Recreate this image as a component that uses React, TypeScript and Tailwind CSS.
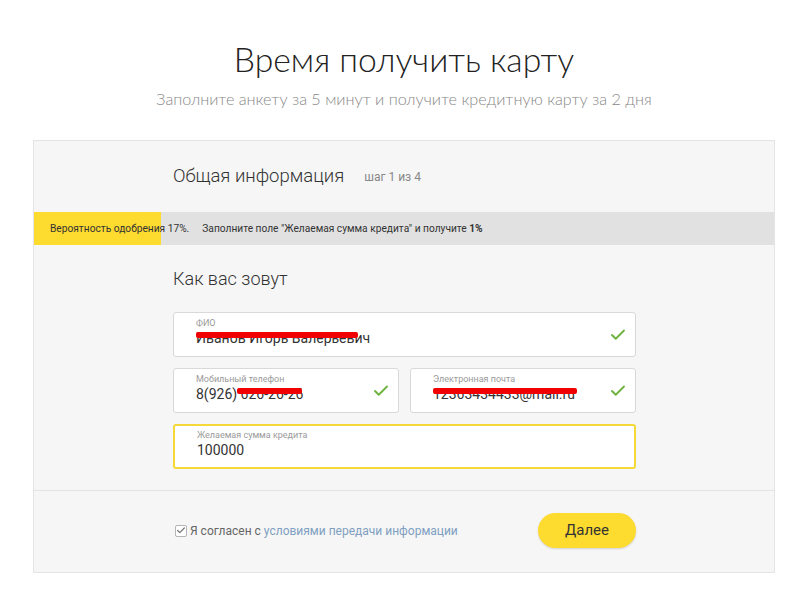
import { Check } from 'lucide-react'

function Field({ label, value, redact, redactLeft = 0, className, active, ok }: {
  label: string
  value: string
  redact?: number
  redactLeft?: number
  className?: string
  active?: boolean
  ok?: boolean
}) {
  return (
    <div
      className={`relative h-[45px] bg-white rounded-[3px] ${active ? 'border-2 border-[#f5d939]' : 'border border-[#d9d9d9]'} ${className ?? ''}`}
    >
      <div className={`pl-[22px] ${active ? 'pt-[4px]' : 'pt-[5px]'}`}>
        <div className="text-[9px] leading-[11px] text-[#9a9a9a]">{label}</div>
        <div className="relative text-[14px] leading-[18px] text-[#333]">
          {value}
          {redact ? (
            <span
              className="absolute top-[3px] h-[6px] bg-[#f00000] rounded-[2px]"
              style={{ width: redact, left: redactLeft }}
            />
          ) : null}
        </div>
      </div>
      {ok && (
        <Check className="absolute right-[8px] top-1/2 -translate-y-1/2 text-[#6db33f]" size={18} strokeWidth={2.5} />
      )}
    </div>
  )
}

export default function App() {
  return (
    <div className="w-[800px] h-[596px] bg-white font-['Open_Sans','Liberation_Sans',sans-serif] overflow-hidden">
      <div className="pt-[37px] pl-[8px] text-center font-['Lato','Liberation_Sans',sans-serif]">
        <h1 className="text-[33.7px] leading-[44px] font-light text-[#222]">
          Время получить карту
        </h1>
        <p className="mt-[8px] text-[16.2px] leading-[20px] font-light text-[#888]">
          Заполните анкету за 5 минут и получите кредитную карту за 2 дня
        </p>
      </div>

      <div className="mx-[33px] mt-[31px] w-[742px] bg-[#f6f6f6] border border-[#e4e4e4] font-['Roboto','Liberation_Sans',sans-serif]">
        <div className="h-[71px] flex items-center pl-[139px] pt-[1px]">
          <span className="text-[18.5px] text-[#333] font-light">Общая информация</span>
          <span className="ml-[20px] text-[12px] text-[#888]">шаг 1 из 4</span>
        </div>

        <div className="relative h-[33px] bg-[#e1e1e1] flex items-center text-[10.2px] text-[#333]">
          <div className="absolute left-0 top-0 h-full w-[127px] bg-[#fedb2f]" />
          <span className="relative pl-[16px]">Вероятность одобрения 17%.</span>
          <span className="relative ml-[13px]">
            Заполните поле "Желаемая сумма кредита" и получите <b>1%</b>
          </span>
        </div>

        <div className="pl-[139px] pr-[138px] pt-[22px] pb-[21px] border-b border-[#e4e4e4]">
          <div className="text-[18px] leading-[24px] text-[#333] font-light">Как вас зовут</div>
          <div className="mt-[21px] flex flex-col gap-[11px]">
            <Field label="ФИО" value="Иванов Игорь Валерьевич" redact={162} ok />
            <div className="flex gap-[11px]">
              <Field className="flex-1" label="Мобильный телефон" value="8(926) 626-26-26" redact={65} redactLeft={41} ok />
              <Field className="flex-1" label="Электронная почта" value="12363434433@mail.ru" redact={144} ok />
            </div>
            <Field label="Желаемая сумма кредита" value="100000" active />
          </div>
        </div>

        <div className="h-[81px] flex items-center pl-[141px] pr-[138px] pb-[2px]">
          <div className="flex items-center gap-[3px] text-[12px] text-[#666]">
            <span className="w-[12px] h-[12px] border border-[#b5b5b5] bg-white rounded-[2px] flex items-center justify-center">
              <Check size={11} strokeWidth={3} className="text-[#777]" />
            </span>
            <span>
              Я согласен с <span className="text-[#7fa0c2]">условиями передачи информации</span>
            </span>
          </div>
          <button className="ml-auto w-[98px] h-[35px] rounded-full bg-[#fedb2f] shadow-[0_1px_2px_rgba(0,0,0,0.15)] text-[15px] text-[#333]">
            Далее
          </button>
        </div>
      </div>
    </div>
  )
}
